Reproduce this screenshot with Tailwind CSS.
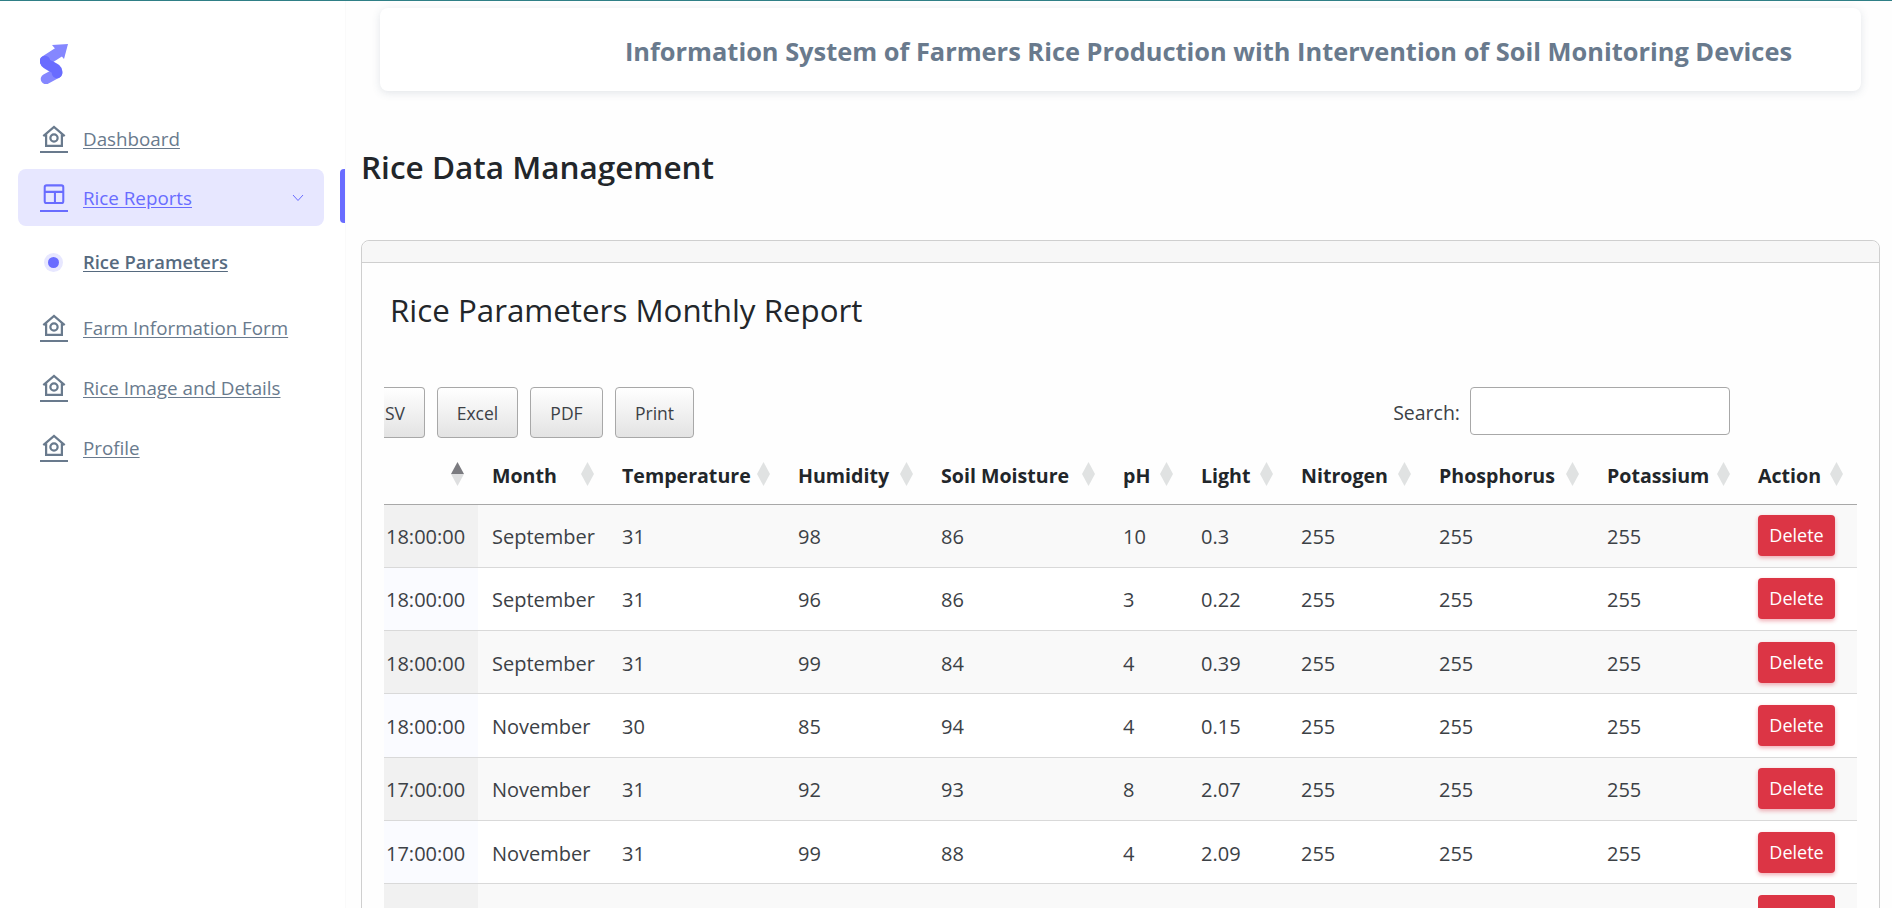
<!DOCTYPE html>
<html lang="en">

<head>
    <meta charset="UTF-8">
    <meta name="viewport" content="width=device-width, initial-scale=1.0">
    <title>Rice Parameters</title>
    <script src="https://cdn.jsdelivr.net/npm/@tailwindcss/browser@4"></script>
</head>

<body class="h-[908px] overflow-hidden bg-white border-t border-[#2f7f86] font-['Open_Sans','Noto_Sans',sans-serif] text-[#566a7f]">
    <svg class="hidden">
        <symbol id="house" viewBox="0 0 28 28">
            <path d="M2.5 12 L14 2 L25.5 12" fill="none" stroke="currentColor" stroke-width="2.4"/>
            <path d="M5.5 10 V22.5 H22.5 V10" fill="none" stroke="currentColor" stroke-width="2.4"/>
            <circle cx="14" cy="14" r="3.9" fill="none" stroke="currentColor" stroke-width="2.4"/>
        </symbol>
        <symbol id="sort" viewBox="0 0 13 24">
            <path d="M6.5 0 L13 12 L6.5 24 L0 12Z" fill="#e0e2e2"/>
        </symbol>
    </svg>
    <div class="flex h-full">
        <!-- Sidebar -->
        <aside class="w-[345px] shrink-0">
            <div class="pl-[40px] pt-[42px] h-[111px]">
                <svg width="28" height="41" viewBox="0 0 28 41" fill="none" stroke-width="10.5" stroke-linecap="round">
                    <path d="M5 18 L19 9" stroke="#8587ff"/>
                    <path d="M12 2 L28 1 L24 16Z" fill="#8587ff" stroke="none"/>
                    <path d="M17 30 L6 36" stroke="#8587ff"/>
                    <path d="M5 18 C5 23 19 24 17 30" stroke="#696cff"/>
                </svg>
            </div>
            <nav class="text-[18.8px] text-[#697a8d] leading-6">
                <a href="#" class="flex items-center h-[57px] pb-[4px] pl-[40px] underline underline-offset-2">
                    <svg class="w-[28px] h-[28px] mr-[15px] border-b-2 border-[#697a8d]"><use href="#house"/></svg>Dashboard
                </a>
                <div class="relative">
                    <a href="#" class="flex items-center h-[57px] ml-[18px] mr-[21px] pl-[22px] pr-[20px] rounded-lg bg-[#e7e7ff] text-[#696cff] underline underline-offset-2">
                        <svg class="w-[28px] h-[28px] mr-[15px] border-b-2 border-[#696cff]" viewBox="0 0 28 28" fill="none" stroke="#696cff" stroke-width="2.2"><rect x="4" y="1.5" width="20" height="19" rx="2"/><path d="M4 8.5 H24 M15 8.5 V20.5"/></svg>Rice Reports
                        <svg class="ml-auto" width="12" height="8" viewBox="0 0 12 8" fill="none" stroke="#696cff" stroke-width="1"><path d="M1 1 L6 6.5 L11 1"/></svg>
                    </a>
                    <div class="absolute right-0 top-0 w-[5px] h-[54px] rounded-l bg-[#696cff]"></div>
                </div>
                <a href="#" class="flex items-center h-[72px] pl-[44px] text-[18.4px] font-semibold text-[#566a7f] underline underline-offset-2">
                    <span class="flex items-center justify-center w-[19px] h-[19px] mr-[20px] rounded-full bg-[#e7e7ff]"><span class="w-[11px] h-[11px] rounded-full bg-[#696cff]"></span></span>Rice Parameters
                </a>
                <a href="#" class="flex items-center h-[60px] pl-[40px] underline underline-offset-2">
                    <svg class="w-[28px] h-[28px] mr-[15px] border-b-2 border-[#697a8d]"><use href="#house"/></svg>Farm Information Form
                </a>
                <a href="#" class="flex items-center h-[60px] pl-[40px] underline underline-offset-2">
                    <svg class="w-[28px] h-[28px] mr-[15px] border-b-2 border-[#697a8d]"><use href="#house"/></svg>Rice Image and Details
                </a>
                <a href="#" class="flex items-center h-[60px] pl-[40px] underline underline-offset-2">
                    <svg class="w-[28px] h-[28px] mr-[15px] border-b-2 border-[#697a8d]"><use href="#house"/></svg>Profile
                </a>
            </nav>
        </aside>

        <!-- Main -->
        <main class="flex-1 min-w-0 pl-[16px] pr-[12px] bg-[#fefefe] shadow-[inset_1px_0_0_#fafafa]">
            <header class="flex items-center justify-end h-[83px] mt-[7px] ml-[19px] mr-[19px] pr-[69px] pt-[3px] rounded-lg bg-white shadow-[0_2px_8px_rgba(67,89,113,0.15)]">
                <h2 class="text-[25.4px] font-bold text-[#697a8d]">Information System of Farmers Rice Production with Intervention of Soil Monitoring Devices</h2>
            </header>

            <h1 class="mt-[54px] mb-[51px] h-[44px] leading-[44px] text-[31.5px] font-semibold text-[#22262a]">Rice Data Management</h1>

            <section class="border border-[#cfcfcf] rounded-lg h-[700px]">
                <div class="h-[22px] bg-[#f7f7f7] border-b border-[#cfcfcf] rounded-t-lg"></div>
                <div class="px-[22px]">
                    <h3 class="mt-[23px] h-[48px] leading-[48px] pl-[6px] text-[31.3px] text-[#22262a]">Rice Parameters Monthly Report</h3>
                    <div class="overflow-hidden">
                        <div class="flex items-start mt-[53px] h-[52px] text-[#3c4146]">
                            <button class="w-[41px] h-[51px] overflow-hidden text-right pr-[19px] pt-[2px] text-[17.5px] border border-l-0 border-[#a8a8a8] rounded-r bg-gradient-to-b from-white to-[#e3e3e3]">SV</button>
                            <button class="ml-[12px] w-[81px] h-[51px] pt-[2px] text-[17.5px] border border-[#a8a8a8] rounded bg-gradient-to-b from-white to-[#e3e3e3]">Excel</button>
                            <button class="ml-[12px] w-[73px] h-[51px] pt-[2px] text-[17.5px] border border-[#a8a8a8] rounded bg-gradient-to-b from-white to-[#e3e3e3]">PDF</button>
                            <button class="ml-[12px] w-[79px] h-[51px] pt-[2px] text-[17.5px] border border-[#a8a8a8] rounded bg-gradient-to-b from-white to-[#e3e3e3]">Print</button>
                            <label class="ml-auto mr-[127px] flex items-center gap-[10px] text-[19.5px] h-[48px]"><span class="pt-[3px]">Search:</span>
                                <input type="text" class="w-[260px] h-[48px] border border-[#a8a8a8] rounded bg-white">
                            </label>
                        </div>
                        <table class="w-[1473px] table-fixed border-collapse text-[20px] text-[#3c4146]">
                            <colgroup>
                                <col class="w-[94px]"><col class="w-[130px]"><col class="w-[176px]"><col class="w-[143px]"><col class="w-[182px]"><col class="w-[78px]"><col class="w-[100px]"><col class="w-[138px]"><col class="w-[168px]"><col class="w-[151px]"><col class="w-[113px]">
                            </colgroup>
                            <thead>
                                <tr class="h-[65px] border-b border-[#a8a8a8] text-left text-[19.6px] font-bold text-[#22262a]">
                                    <th class="relative px-[14px]">
                                        <svg class="absolute right-[14px] top-[23px]" width="13" height="24" viewBox="0 0 13 24"><path d="M6.5 0 L13 12 H0Z" fill="#7b7b80"/><path d="M0 12 H13 L6.5 24Z" fill="#dedfe0"/></svg>
                                    </th>
                                    <th class="relative px-[14px] pt-[8px]">Month<svg class="absolute right-[14px] top-[23px] w-[13px] h-[24px]"><use href="#sort"/></svg></th>
                                    <th class="relative px-[14px] pt-[8px]">Temperature<svg class="absolute right-[14px] top-[23px] w-[13px] h-[24px]"><use href="#sort"/></svg></th>
                                    <th class="relative px-[14px] pt-[8px]">Humidity<svg class="absolute right-[14px] top-[23px] w-[13px] h-[24px]"><use href="#sort"/></svg></th>
                                    <th class="relative px-[14px] pt-[8px]">Soil Moisture<svg class="absolute right-[14px] top-[23px] w-[13px] h-[24px]"><use href="#sort"/></svg></th>
                                    <th class="relative px-[14px] pt-[8px]">pH<svg class="absolute right-[14px] top-[23px] w-[13px] h-[24px]"><use href="#sort"/></svg></th>
                                    <th class="relative px-[14px] pt-[8px]">Light<svg class="absolute right-[14px] top-[23px] w-[13px] h-[24px]"><use href="#sort"/></svg></th>
                                    <th class="relative px-[14px] pt-[8px]">Nitrogen<svg class="absolute right-[14px] top-[23px] w-[13px] h-[24px]"><use href="#sort"/></svg></th>
                                    <th class="relative px-[14px] pt-[8px]">Phosphorus<svg class="absolute right-[14px] top-[23px] w-[13px] h-[24px]"><use href="#sort"/></svg></th>
                                    <th class="relative px-[14px] pt-[8px]">Potassium<svg class="absolute right-[14px] top-[23px] w-[13px] h-[24px]"><use href="#sort"/></svg></th>
                                    <th class="relative px-[14px] pt-[8px]">Action<svg class="absolute right-[14px] top-[23px] w-[13px] h-[24px]"><use href="#sort"/></svg></th>
                                </tr>
                            </thead>
                            <tbody id="rows"></tbody>
                        </table>
                    </div>
                </div>
            </section>
        </main>
    </div>

    <script>
        const data = [
            ['18:00:00', 'September', 31, 98, 86, 10, '0.3'],
            ['18:00:00', 'September', 31, 96, 86, 3, '0.22'],
            ['18:00:00', 'September', 31, 99, 84, 4, '0.39'],
            ['18:00:00', 'November', 30, 85, 94, 4, '0.15'],
            ['17:00:00', 'November', 31, 92, 93, 8, '2.07'],
            ['17:00:00', 'November', 31, 99, 88, 4, '2.09'],
        ];
        const tbody = document.getElementById('rows');
        data.forEach((r, i) => {
            const odd = i % 2 === 0;
            tbody.innerHTML += `<tr class="h-[63.3px] border-b border-[#d9d9d9] ${odd ? 'bg-[#f9f9f9]' : 'bg-white'}">
                <td class="pl-[2px] pt-[3px] ${odd ? 'bg-[#f1f1f1]' : 'bg-[#fafbff]'}">${r[0]}</td>
                <td class="px-[14px] pt-[3px]">${r[1]}</td><td class="px-[14px] pt-[3px]">${r[2]}</td><td class="px-[14px] pt-[3px]">${r[3]}</td>
                <td class="px-[14px] pt-[3px]">${r[4]}</td><td class="px-[14px] pt-[3px]">${r[5]}</td><td class="px-[14px] pt-[3px]">${r[6]}</td>
                <td class="px-[14px] pt-[3px]">255</td><td class="px-[14px] pt-[3px]">255</td><td class="px-[14px] pt-[3px]">255</td>
                <td class="px-[14px]"><button class="w-[77px] h-[41px] rounded bg-[#dc3545] text-white text-[18px] shadow-[0_2px_4px_rgba(220,53,69,0.4)]">Delete</button></td>
            </tr>`;
        });
        // partly visible row at the fold
        tbody.innerHTML += `<tr class="h-[63px] bg-[#f9f9f9]"><td class="bg-[#f1f1f1]"></td><td colspan="9"></td>
            <td class="px-[14px]"><div class="w-[77px] h-[41px] rounded bg-[#dc3545]"></div></td></tr>`;
    </script>
</body>

</html>
